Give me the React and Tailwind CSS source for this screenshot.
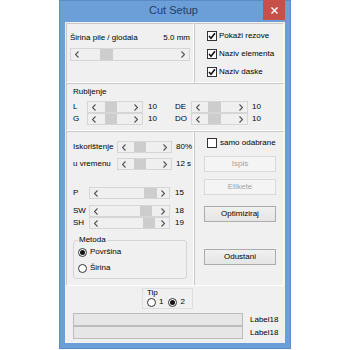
const Chev = ({ dir }) => (
  <svg width="4" height="7" viewBox="0 0 4 7" className="shrink-0">
    <polyline
      points={dir === 'l' ? '3.5,0.5 0.5,3.5 3.5,6.5' : '0.5,0.5 3.5,3.5 0.5,6.5'}
      fill="none"
      stroke="#505050"
      strokeWidth="1.1"
    />
  </svg>
)

// thumb position comes from the scroll value
function Scroll({ className, pos, tw = 12 }) {
  return (
    <div className={`relative flex items-center justify-between px-[4px] bg-[#efefef] border border-[#d6d6d6] ${className}`}>
      <Chev dir="l" />
      <div className="absolute top-0 bottom-0 bg-[#cdcdcd]" style={{ left: pos, width: tw }} />
      <Chev dir="r" />
    </div>
  )
}

function Check({ checked, children }) {
  return (
    <div className="flex items-center h-[18px] gap-[2px]">
      <div className="w-[10px] h-[10px] border border-[#333] bg-white flex items-center justify-center">
        {checked && (
          <svg width="8" height="8" viewBox="0 0 8 8">
            <polyline points="1,4 3,6.2 7,1.3" fill="none" stroke="#111" strokeWidth="1.6" />
          </svg>
        )}
      </div>
      <span>{children}</span>
    </div>
  )
}

function Radio({ on, children }) {
  return (
    <div className="flex items-center gap-[3px] h-[10px]">
      <div className="w-[9px] h-[9px] rounded-full border border-[#333] bg-white flex items-center justify-center">
        {on && <div className="w-[5px] h-[5px] rounded-full bg-[#111]" />}
      </div>
      <span>{children}</span>
    </div>
  )
}

function Btn({ disabled, className = '', children }) {
  return (
    <div
      className={`ml-[9px] w-[72px] h-[16px] flex items-center justify-center border ${
        disabled
          ? 'border-[#d9d9d9] bg-[#f4f4f4] text-[#a3a3a3]'
          : 'border-[#acacac] bg-gradient-to-b from-[#f0f0f0] to-[#e5e5e5] text-black'
      } ${className}`}
    >
      {children}
    </div>
  )
}

const panel = 'border border-t-[#c9c9c9] border-l-[#c9c9c9] border-b-white border-r-white'

export default function App() {
  return (
    <div className="w-[350px] h-[350px] bg-white font-['Liberation_Sans',Arial,sans-serif] text-[8px] leading-[10px] text-black">
      <div className="ml-[59px] w-[232px] h-[349px] bg-[#6c9fd7] border border-[#5a8bc8] flex flex-col">
        <div className="relative h-[21px] flex items-center justify-center">
          <span className="text-[11px] leading-[13px] text-[#213f68] ml-[-3px] mt-[-2px]">Cut Setup</span>
          <div className="absolute right-[5px] top-[-1px] w-[22px] h-[20px] bg-[#c8504a] flex items-center justify-center">
            <svg width="7" height="7" viewBox="0 0 7 7">
              <path d="M0.5 0.5 L6.5 6.5 M6.5 0.5 L0.5 6.5" stroke="#fff" strokeWidth="1.4" />
            </svg>
          </div>
        </div>

        <div className="mx-[5px] h-[321px] bg-[#f0f0f0] p-[1px] flex flex-col">
          {/* top row */}
          <div className="flex h-[60px]">
            <div className={`w-[128px] ${panel} pt-[9px] px-[3px]`}>
              <div className="flex justify-between h-[10px]">
                <span>Širina pile / glodala</span>
                <span>5.0 mm</span>
              </div>
              <Scroll className="mt-[5px] h-[13px]" pos={29} tw={13} />
            </div>
            <div className={`flex-1 ${panel} pt-[3px] pl-[12px]`}>
              <Check checked>Pokaži rezove</Check>
              <Check checked>Naziv elementa</Check>
              <Check checked>Naziv daske</Check>
            </div>
          </div>

          {/* Rubljenje */}
          <div className={`h-[48px] ${panel} pt-[3px] pl-[6px]`}>
            <div className="h-[10px]">Rubljenje</div>
            <div className="mt-[4px] flex flex-col">
              {[
                ['L', 'DE'],
                ['G', 'DO'],
              ].map(([a, b]) => (
                <div key={a} className="flex items-center h-[12px]">
                  <span className="w-[14px]">{a}</span>
                  <Scroll className="w-[56px] h-[12px]" pos={17} />
                  <span className="ml-[5px] w-[27px]">10</span>
                  <span className="w-[16px]">{b}</span>
                  <Scroll className="w-[57px] h-[12px]" pos={16} tw={13} />
                  <span className="ml-[4px]">10</span>
                </div>
              ))}
            </div>
          </div>

          {/* middle row */}
          <div className="flex h-[155px]">
            <div className={`w-[128px] ${panel} pt-[9px] pl-[6px]`}>
              <div className="flex items-center h-[12px]">
                <span className="w-[44px]">Iskorištenje</span>
                <Scroll className="w-[55px] h-[12px]" pos={16} />
                <span className="ml-[4px]">80%</span>
              </div>
              <div className="flex items-center h-[12px] mt-[5px]">
                <span className="w-[44px]">u vremenu</span>
                <Scroll className="w-[55px] h-[12px]" pos={16} />
                <span className="ml-[4px]">12 s</span>
              </div>
              <div className="flex items-center h-[12px] mt-[17px]">
                <span className="w-[16px]">P</span>
                <Scroll className="w-[81px] h-[12px]" pos={54} tw={13} />
                <span className="ml-[5px]">15</span>
              </div>
              <div className="flex items-center h-[12px] mt-[6px]">
                <span className="w-[16px]">SW</span>
                <Scroll className="w-[81px] h-[12px]" pos={50} />
                <span className="ml-[5px]">18</span>
              </div>
              <div className="flex items-center h-[12px]">
                <span className="w-[16px]">SH</span>
                <Scroll className="w-[81px] h-[12px]" pos={53} />
                <span className="ml-[5px]">19</span>
              </div>
              <fieldset className="mt-[6px] w-[114px] border border-[#d5d5d5] rounded-[3px] pl-[4px] pb-[5px]">
                <legend className="px-[1px] leading-[10px]">Metoda</legend>
                <div className="mt-[2px]">
                  <Radio on>Površina</Radio>
                </div>
                <div className="mt-[6px]">
                  <Radio>Širina</Radio>
                </div>
              </fieldset>
            </div>
            <div className={`flex-1 ${panel} pt-[6px]`}>
              <div className="pl-[12px] flex items-center h-[10px] gap-[3px]">
                <div className="w-[10px] h-[10px] border border-[#333] bg-white" />
                <span>samo odabrane</span>
              </div>
              <Btn disabled className="mt-[8px]">Ispis</Btn>
              <Btn disabled className="mt-[7px]">Etikete</Btn>
              <Btn className="mt-[11px]">Optimiziraj</Btn>
              <Btn className="mt-[27px]">Odustani</Btn>
            </div>
          </div>

          {/* bottom */}
          <div className="flex-1 flex flex-col">
            <div className="mt-[2px] ml-[76px] w-[51px] h-[21px] border border-[#dedede] pl-[4px]">
              <div className="h-[8px] leading-[8px]">Tip</div>
              <div className="flex items-center gap-[5px] h-[10px]">
                <Radio>1</Radio>
                <Radio on>2</Radio>
              </div>
            </div>
            <div className="mt-[4px] ml-[7px] flex flex-col">
              {[0, 1].map((i) => (
                <div key={i} className="flex items-center h-[13px]">
                  <div className="w-[170px] h-[13px] bg-[#e6e6e6] border border-[#bcbcbc]" />
                  <span className="ml-[7px]">Label18</span>
                </div>
              ))}
            </div>
          </div>
        </div>
      </div>
    </div>
  )
}
